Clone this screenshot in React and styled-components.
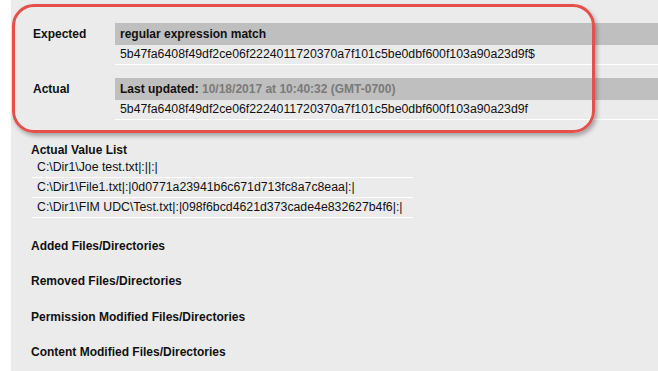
import styled, { createGlobalStyle } from "styled-components";

const GlobalStyle = createGlobalStyle`
    html, body {
        margin: 0;
        padding: 0;
        background: #ffffff;
    }
    body {
        font-family: "Liberation Sans", Arial, sans-serif;
        font-size: 12.3px;
        color: #111111;
    }
`

const values = [
    "C:\\Dir1\\Joe test.txt|:||:|",
    "C:\\Dir1\\File1.txt|:|0d0771a23941b6c671d713fc8a7c8eaa|:|",
    "C:\\Dir1\\FIM UDC\\Test.txt|:|098f6bcd4621d373cade4e832627b4f6|:|",
];

const sections = [
    "Added Files/Directories",
    "Removed Files/Directories",
    "Permission Modified Files/Directories",
    "Content Modified Files/Directories",
];

const App = () => {
    return (
        <>
            <GlobalStyle />
            <Page>
                <Strip />
                <Content>
                    <Compare>
                        <Label>Expected</Label>
                        <Cell>
                            <Bar>regular expression match</Bar>
                            <Hash>5b47fa6408f49df2ce06f2224011720370a7f101c5be0dbf600f103a90a23d9f$</Hash>
                        </Cell>
                        <Label>Actual</Label>
                        <Cell>
                            <Bar>Last updated: <Stamp>10/18/2017 at 10:40:32 (GMT-0700)</Stamp></Bar>
                            <Hash>5b47fa6408f49df2ce06f2224011720370a7f101c5be0dbf600f103a90a23d9f</Hash>
                        </Cell>
                    </Compare>
                    <Highlight />

                    <ListTitle>Actual Value List</ListTitle>
                    <ValueList>
                        {
                            values.map((v, i) => (
                                <Item key={i}>{v}</Item>
                            ))
                        }
                    </ValueList>

                    <Sections>
                        {
                            sections.map((s, i) => (
                                <Section key={i}>{s}</Section>
                            ))
                        }
                    </Sections>
                </Content>
            </Page>
        </>
    )
}

const Page = styled.div`
    display: flex;
    width: 658px;
    height: 371px;
    overflow: hidden;
`

const Strip = styled.div`
    width: 11px;
    flex-shrink: 0;
    background: #ffffff;
`

const Content = styled.div`
    position: relative;
    flex: 1;
    background: #ebebeb;
    padding-top: 23px;
`

const Compare = styled.div`
    display: grid;
    grid-template-columns: 104px 1fr;
    row-gap: 13px;
`

const Label = styled.div`
    padding-left: 22px;
    height: 22px;
    line-height: 22px;
    font-size: 12px;
    font-weight: 700;
`

const Cell = styled.div`
    display: flex;
    flex-direction: column;
`

const Bar = styled.div`
    height: 22px;
    line-height: 22px;
    padding-left: 5px;
    background: #bfbfbf;
    font-size: 12px;
    font-weight: 700;
    white-space: nowrap;
`

const Stamp = styled.span`
    color: #7a7a7a;
`

const Hash = styled.div`
    height: 19px;
    line-height: 19px;
    padding-left: 5px;
    border-bottom: 1px solid #ffffff;
    white-space: nowrap;
`

const Highlight = styled.div`
    position: absolute;
    left: 1px;
    top: 4px;
    width: 577px;
    height: 123px;
    border: 3px solid #e5504b;
    border-radius: 22px;
    box-shadow: 2px 3px 4px rgba(0, 0, 0, 0.3);
    pointer-events: none;
`

const ListTitle = styled.div`
    margin-top: 22px;
    padding-left: 20px;
    height: 16px;
    line-height: 16px;
    font-size: 12px;
    font-weight: 700;
`

const ValueList = styled.div`
    margin-left: 21px;
    width: 381px;
`

const Item = styled.div`
    height: 19px;
    line-height: 19px;
    padding-left: 5px;
    border-bottom: 1px solid #ffffff;
    white-space: nowrap;
`

const Sections = styled.div`
    margin-top: 11px;
`

const Section = styled.div`
    padding-left: 20px;
    height: 35.4px;
    line-height: 35px;
    font-size: 12px;
    font-weight: 700;
`

export default App;
